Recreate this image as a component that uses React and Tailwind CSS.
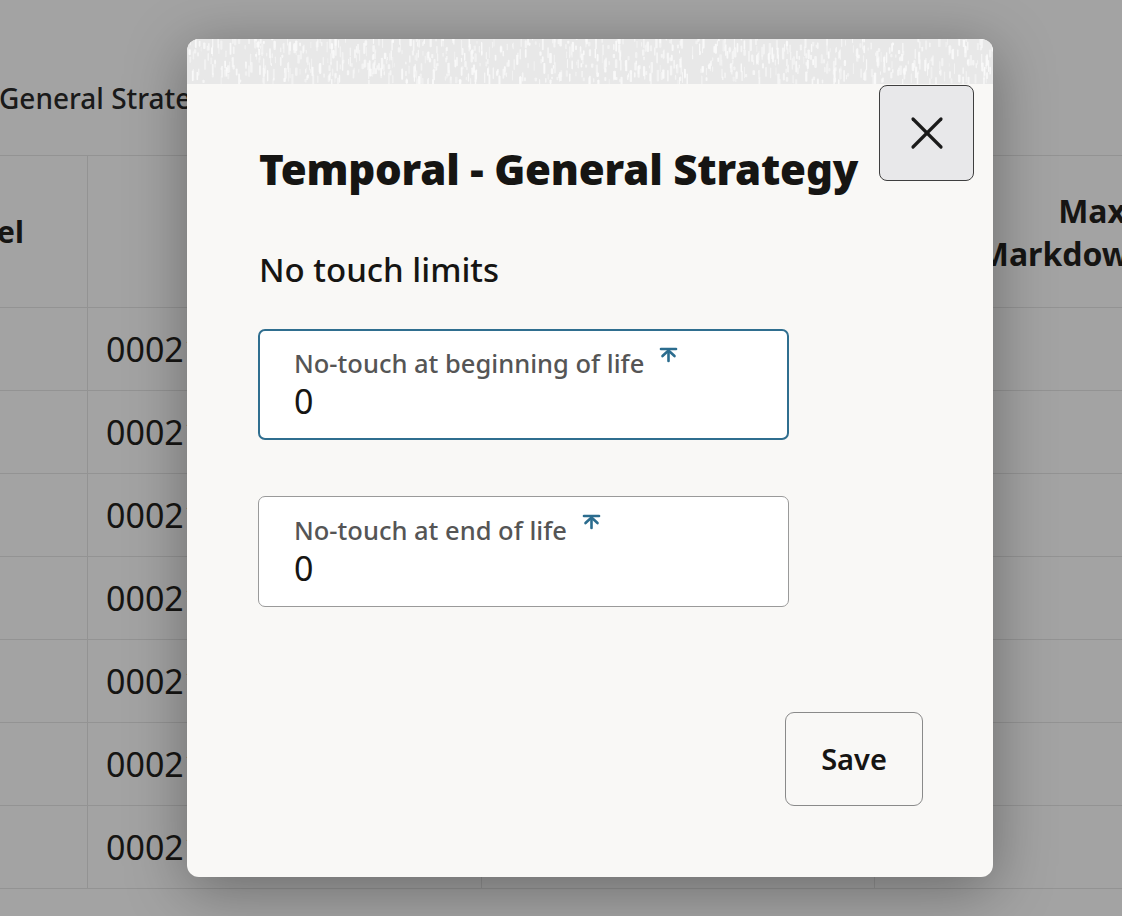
import React from "react";

function Texture() {
  const strokes = [];
  let seed = 7;
  const rnd = () => {
    seed = (seed * 9301 + 49297) % 233280;
    return seed / 233280;
  };
  for (let i = 0; i < 900; i++) {
    const x = rnd() * 806;
    const y = rnd() * 45 - 4;
    const h = 3 + rnd() * 9;
    const w = 0.8 + rnd() * 1.8;
    strokes.push(
      <rect key={i} x={x.toFixed(1)} y={y.toFixed(1)} width={w.toFixed(1)} height={h.toFixed(1)} rx="0.8" fill="#fafafa" opacity={(0.45 + rnd() * 0.5).toFixed(2)} />
    );
  }
  return (
    <svg width="806" height="45" viewBox="0 0 806 45" className="block shrink-0">
      <rect width="806" height="45" fill="#e8e8e8" />
      {strokes}
    </svg>
  );
}

function Required() {
  return (
    <svg width="19" height="16" viewBox="0 0 19 16" className="shrink-0">
      <g stroke="#2b6c8e" strokeWidth="2.6" strokeLinecap="round" fill="none">
        <line x1="2" y1="2" x2="17" y2="2" />
        <line x1="9.5" y1="3.5" x2="9.5" y2="14" />
        <line x1="9.5" y1="3.5" x2="3.5" y2="9" />
        <line x1="9.5" y1="3.5" x2="15.5" y2="9" />
      </g>
    </svg>
  );
}

function Field({ label, focused }) {
  return (
    <div
      className={
        "w-[531px] h-[111px] rounded-[7px] bg-white flex flex-col " +
        (focused ? "border-2 border-[#2f6e8f] pl-[34px] pt-[15px]" : "border border-[#9a9a9a] pl-[35px] pt-[16px]")
      }
    >
      <div className="flex items-start gap-[15px]">
        <span className="text-[25.5px] leading-[34px] font-medium text-[#555555]">{label}</span>
        <span className="mt-[1px]"><Required /></span>
      </div>
      <div className="text-[34px] leading-[42px] text-[#161513]">0</div>
    </div>
  );
}

export default function App() {
  const rows = [0, 1, 2, 3, 4, 5, 6];
  return (
    <div
      className="relative w-[1122px] h-[916px] overflow-hidden bg-[#a3a3a3] text-[#161513]"
      style={{ fontFamily: '"Noto Sans", "Open Sans", sans-serif' }}
    >
      {/* Underlying page */}
      <div className="h-[155px] flex items-start pt-[78px]">
        <span className="text-[28px] leading-[40px] font-medium text-[#1a1a1a] ml-[-1px]">General Strategy</span>
      </div>
      <div className="grid grid-cols-[88px_394px_393px_1fr] border-t border-[#939393]">
        <div className="h-[152px] border-r border-b border-[#939393] flex items-center">
          <span className="text-[30px] font-bold leading-[42px] ml-[-3px]">el</span>
        </div>
        <div className="h-[152px] border-r border-b border-[#939393]" />
        <div className="h-[152px] border-r border-b border-[#939393]" />
        <div className="h-[152px] border-b border-[#939393] flex flex-col items-end justify-center">
          <span className="text-[32px] font-bold leading-[43px] mr-[-4px]">Max</span>
          <span className="text-[32px] font-bold leading-[43px] mr-[-28px]">Markdown</span>
        </div>
        {rows.map((r) => (
          <React.Fragment key={r}>
            <div className="h-[83px] border-r border-b border-[#939393]" />
            <div className="h-[83px] border-r border-b border-[#939393] flex items-center pl-[18px]">
              <span className="text-[34px] leading-[40px]">000214</span>
            </div>
            <div className="h-[83px] border-r border-b border-[#939393]" />
            <div className="h-[83px] border-b border-[#939393]" />
          </React.Fragment>
        ))}
      </div>

      {/* Dialog */}
      <div className="absolute left-[187px] top-[39px] w-[806px] h-[838px] rounded-[12px] bg-[#f9f8f6] overflow-hidden shadow-[0_12px_60px_rgba(0,0,0,0.35)] flex flex-col">
        <Texture />
        <div className="flex-1 flex flex-col pl-[72px] pr-[19px]">
          <div className="flex items-start justify-between">
            <h1 className="pt-[58px] text-[42px] leading-[54px] font-black tracking-[-0.2px] text-[#161513] whitespace-nowrap">
              Temporal - General Strategy
            </h1>
            <button className="mt-[1px] w-[95px] h-[96px] rounded-[8px] bg-[#e8e8ea] border-[1.5px] border-[#3f3f3f] flex items-center justify-center shrink-0">
              <svg width="34" height="34" viewBox="0 0 34 34">
                <g stroke="#1a1a1a" strokeWidth="3.2" strokeLinecap="round">
                  <line x1="3" y1="3" x2="31" y2="31" />
                  <line x1="31" y1="3" x2="3" y2="31" />
                </g>
              </svg>
            </button>
          </div>
          <div className="mt-[52px] text-[33px] leading-[44px] font-medium text-[#161513]">No touch limits</div>
          <div className="mt-[37px] ml-[-1px]">
            <Field label="No-touch at beginning of life" focused />
          </div>
          <div className="mt-[56px] ml-[-1px]">
            <Field label="No-touch at end of life" />
          </div>
          <div className="flex justify-end mt-[105px] pr-[51px]">
            <button className="w-[138px] h-[94px] rounded-[9px] border border-[#8a8a8a] bg-transparent text-[29px] font-semibold text-[#161513]">
              Save
            </button>
          </div>
        </div>
      </div>
    </div>
  );
}
